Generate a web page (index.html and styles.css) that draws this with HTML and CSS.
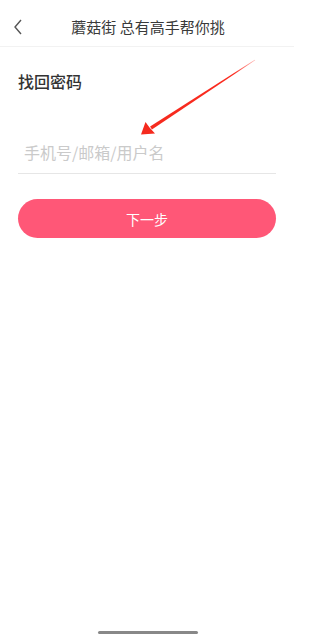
FILE: index.html
```html
<!DOCTYPE html>
<html lang="zh">
<head>
<meta charset="utf-8">
<link rel="stylesheet" href="styles.css">
</head>
<body>
<div class="page">
  <header class="nav">
    <svg class="back" width="12" height="18" viewBox="0 0 12 18"><path d="M9 2 L3 9 L9 16" fill="none" stroke="#555" stroke-width="1.4"/></svg>
    <span class="title">蘑菇街 总有高手帮你挑</span>
  </header>
  <main class="content">
    <h1 class="heading">找回密码</h1>
    <div class="field"><span class="placeholder">手机号/邮箱/用户名</span></div>
    <button class="next">下一步</button>
  </main>
  <svg class="arrow" width="294" height="636" viewBox="0 0 294 636">
    <defs>
      <linearGradient id="g" x1="255" y1="60" x2="150" y2="128" gradientUnits="userSpaceOnUse">
        <stop offset="0" stop-color="#ff3a30" stop-opacity="0.35"/>
        <stop offset="0.2" stop-color="#fb2a1e"/>
        <stop offset="1" stop-color="#f52a1e"/>
      </linearGradient>
    </defs>
    <polygon points="255.2,60.3 254.8,59.7 150.1,126.5 151.9,129.5" fill="url(#g)"/>
    <polygon points="141,134.5 145.5,122 149.5,127.5 155,133.5" fill="#f52a1e"/>
  </svg>
  <div class="home-bar"></div>
</div>
</body>
</html>
```
FILE: styles.css
```css
html, body {
  margin: 0;
  padding: 0;
  background: #fff;
}
body {
  font-family: "Noto Sans CJK SC", "Noto Sans", sans-serif;
  color: #333;
}
.page {
  position: relative;
  width: 294px;
  height: 636px;
  overflow: hidden;
}
.nav {
  height: 46px;
  border-bottom: 1px solid #f2f2f2;
  display: flex;
  align-items: center;
  justify-content: center;
  position: relative;
}
.back {
  position: absolute;
  left: 12px;
  top: 18px;
}
.title {
  font-size: 15px;
  color: #3a3a3a;
  margin-top: 6px;
  margin-left: 2px;
}
.content {
  padding: 0 18px;
}
.heading {
  margin: 22px 0 0;
  font-size: 16px;
  line-height: 24px;
  font-weight: 500;
  color: #333;
}
.field {
  margin-top: 40px;
  height: 40px;
  border-bottom: 1px solid #e6e6e6;
  display: flex;
  align-items: center;
}
.placeholder {
  padding-left: 6px;
  font-size: 16px;
  color: #cacaca;
  margin-top: -2px;
}
.next {
  display: block;
  width: 100%;
  margin-top: 25px;
  height: 39px;
  border: none;
  border-radius: 20px;
  background: #ff5777;
  color: #fff;
  font-family: inherit;
  font-size: 14px;
  padding: 0;
}
.arrow {
  position: absolute;
  left: 0;
  top: 0;
  pointer-events: none;
}
.home-bar {
  position: absolute;
  left: 98px;
  bottom: 2px;
  width: 100px;
  height: 3px;
  border-radius: 2px;
  background: #888;
}
```
